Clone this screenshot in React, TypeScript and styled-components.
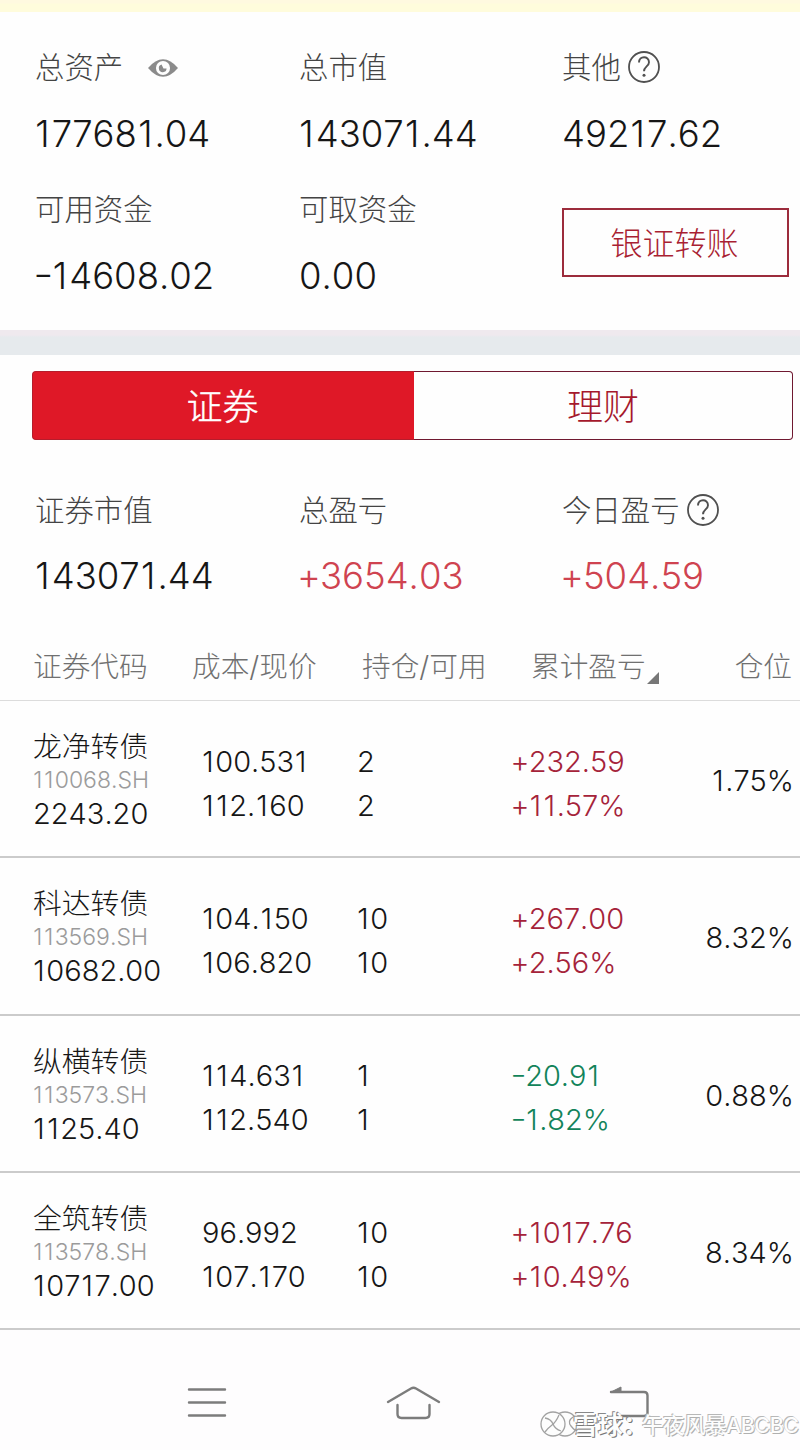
import React from "react";
import styled, { createGlobalStyle, css } from "styled-components";

const GlobalStyle = createGlobalStyle`
  * { box-sizing: border-box; }
  body {
    margin: 0;
    background: #fefefe;
    font-family: Inter, "Noto Sans CJK SC", sans-serif;
    font-weight: 300;
    font-kerning: none;
    color: #161616;
  }
`;

const Screen = styled.main`
  width: 800px;
  height: 1450px;
  overflow: hidden;
  position: relative;
  display: flex;
  flex-direction: column;
`;

const NoticeStrip = styled.div`
  height: 12px;
  background: linear-gradient(#fff9e0 0 3px, #fffcdc 4px);
`;

const Account = styled.section`
  height: 318px;
  padding: 36px 12px 0 35px;
  display: grid;
  grid-template-columns: 264px 263px 226px;
  grid-template-rows: 142px 141px;
`;

const Figures = styled.section`
  display: grid;
  grid-template-columns: 264px 263px 1fr;
  padding: 51px 12px 0 35px;
  height: 192px;
`;

const Label = styled.div`
  height: 40px;
  display: flex;
  align-items: center;
  font-size: 29.4px;
  line-height: 40px;
  color: #444;
  white-space: nowrap;
`;

type Tone = "plain" | "soft" | "up" | "down";
const tones: Record<Tone, string> = {
  plain: "#161616",
  soft: "#cf4350",
  up: "#a5233a",
  down: "#12835a",
};

const Amount = styled.div<{ $tone?: Tone }>`
  margin-top: 22.5px;
  height: 46px;
  line-height: 46px;
  font-size: 36.5px;
  color: ${(p) => tones[p.$tone ?? "plain"]};
  white-space: nowrap;
`;

const EyeIcon = styled.svg`
  margin-left: 25px;
`;

const HelpIcon = styled.svg`
  margin: -2px 0 0 6.5px;
`;

const TransferButton = styled.button`
  margin-top: 18px;
  width: 227px;
  height: 69px;
  padding: 2px 2px 0 0;
  border: 2px solid #9c2c3c;
  background: transparent;
  color: #a91f33;
  font: inherit;
  font-size: 32px;
  line-height: 60px;
`;

const Divider = styled.div`
  height: 25px;
  background: linear-gradient(#efe9ee 0 5px, #e6eaed 7px);
`;

const Tabs = styled.div`
  display: flex;
  margin: 15.5px 7px 0 32px;
  height: 69px;
`;

const Tab = styled.button<{ $active?: boolean }>`
  padding: 3px 0 0;
  font: inherit;
  font-size: 36px;
  line-height: 60px;
  ${(p) =>
    p.$active
      ? css`
          width: 382px;
          padding-right: 2px;
          border: 1px solid #b51d2c;
          border-right: 0;
          border-radius: 4px 0 0 4px;
          background: #df1827;
          color: #fff;
          -webkit-text-stroke: 0.4px #fff;
        `
      : css`
          flex: 1;
          border: 1.5px solid #6f1830;
          border-left: 0;
          border-radius: 0 4px 4px 0;
          background: #fefefe;
          color: #a5182c;
        `}
`;

const tableColumns = css`
  display: grid;
  grid-template-columns: 159px 170px 169px 150px 1fr;
  padding: 0 8px 0 33px;
`;

const TableHead = styled.div`
  ${tableColumns}
  height: 69.5px;
  border-bottom: 1px solid #dcdcdc;
  font-size: 28.7px;
  line-height: 70px;
  color: #707070;
  white-space: nowrap;
`;

const HeadCell = styled.div<{ $end?: boolean }>`
  display: flex;
  justify-content: ${(p) => (p.$end ? "flex-end" : "flex-start")};
`;

const SortMark = styled.svg`
  margin-top: 40px;
  margin-left: 1px;
`;

const Row = styled.div`
  ${tableColumns}
  padding-right: 6px;
  grid-template-columns: 169px 155px 155px 149px 1fr;
  height: 157.25px;
  border-bottom: 2px solid #cbcbcb;
  white-space: nowrap;
`;

const NameCell = styled.div`
  padding-top: 27px;
`;

const Name = styled.div`
  font-size: 28.8px;
  line-height: 37px;
`;

const Code = styled.div`
  font-size: 23px;
  line-height: 30px;
  color: #9b9b9b;
`;

const Worth = styled.div`
  font-size: 29px;
  line-height: 38px;
`;

const PairCell = styled.div<{ $tone?: Tone }>`
  padding-top: 38.5px;
  font-size: 29px;
  line-height: 44px;
  color: ${(p) => tones[p.$tone ?? "plain"]};
`;

const ShareCell = styled.div`
  font-size: 29px;
  line-height: 159px;
  display: flex;
  justify-content: flex-end;
`;

const NavBar = styled.nav`
  flex: 1;
  display: flex;
  align-items: flex-start;
  padding: 55px 0 0 187px;
  background: #fefdfe;
`;

const NavIcon = styled.svg<{ $gap?: number }>`
  margin-left: ${(p) => p.$gap ?? 0}px;
  fill: none;
  stroke: #7c7c7c;
  stroke-width: 2.4;
  stroke-linecap: round;
  stroke-linejoin: round;
`;

const Watermark = styled.div`
  position: absolute;
  left: 539px;
  top: 1407px;
  display: flex;
  align-items: center;
  height: 36px;
  line-height: 36px;
  white-space: nowrap;
  color: #fdfdfd;
  text-shadow: 1px 1px 0 #b0b0b0, -1px -1px 0 #b8b8b8;
`;

const MarkBrand = styled.span`
  margin-left: -6px;
  width: 69px;
  font-size: 25px;
  font-weight: 700;
  text-shadow: 1px 1px 0 #777, -1px -1px 0 #888;
`;

const MarkUser = styled.span`
  font-size: 21.5px;
  font-weight: 500;
  letter-spacing: -0.5px;
`;

const Help = () => (
  <HelpIcon width="34" height="34" viewBox="0 0 34 34" fill="none" stroke="#505050">
    <circle cx="17" cy="17" r="15" strokeWidth="1.8" />
    <path d="M12 12.5c0-7 10-7 10-.3 0 4-5 4.5-5 9" strokeWidth="1.9" />
    <circle cx="17" cy="25.3" r="1.5" fill="#505050" stroke="none" />
  </HelpIcon>
);

interface Holding {
  name: string;
  code: string;
  worth: string;
  price: [string, string];
  amount: [string, string];
  gain: [string, string];
  share: string;
}

const holdings: Holding[] = [
  { name: "龙净转债", code: "110068.SH", worth: "2243.20", price: ["100.531", "112.160"], amount: ["2", "2"], gain: ["+232.59", "+11.57%"], share: "1.75%" },
  { name: "科达转债", code: "113569.SH", worth: "10682.00", price: ["104.150", "106.820"], amount: ["10", "10"], gain: ["+267.00", "+2.56%"], share: "8.32%" },
  { name: "纵横转债", code: "113573.SH", worth: "1125.40", price: ["114.631", "112.540"], amount: ["1", "1"], gain: ["-20.91", "-1.82%"], share: "0.88%" },
  { name: "全筑转债", code: "113578.SH", worth: "10717.00", price: ["96.992", "107.170"], amount: ["10", "10"], gain: ["+1017.76", "+10.49%"], share: "8.34%" },
];

const Glyph = styled.span<{ $pad: number; $lead: number }>`
  margin-left: ${(p) => p.$lead}em;
  letter-spacing: ${(p) => p.$pad}em;
`;

const Minus = styled.span`
  display: inline-block;
  margin: 0 0.01em 0 -0.01em;
  transform: translateY(-0.05em) scaleX(1.22);
`;

const Num = ({ children }: { children: string }) => (
  <>
    {children.split(/(1|[+-])/).filter(Boolean).map((part, i) => {
      if (part === "1") return <Glyph key={i} $pad={0.055} $lead={i ? 0.035 : 0.01}>{part}</Glyph>;
      if (part === "+") return <Glyph key={i} $pad={-0.025} $lead={-0.055}>{part}</Glyph>;
      if (part === "-") return <Minus key={i}>{part}</Minus>;
      return <React.Fragment key={i}>{part}</React.Fragment>;
    })}
  </>
);

const Pair = ({ values, tone }: { values: [string, string]; tone?: Tone }) => (
  <PairCell $tone={tone}>
    <div><Num>{values[0]}</Num></div>
    <div><Num>{values[1]}</Num></div>
  </PairCell>
);

export default function App() {
  return (
    <Screen>
      <GlobalStyle />
      <NoticeStrip />
      <Account>
        <div>
          <Label>
            总资产
            <EyeIcon width="30" height="20" viewBox="0 0 31 20">
              <path d="M0 10Q15.500 -8 31 10Q15.500 28 0 10Z" fill="#8b8b8b" />
              <circle cx="15.500" cy="10" r="7.300" fill="#fefefe" />
              <path d="M14 6.500A4 4 0 1 0 19.200 10.500L16 10.500Z" fill="#8b8b8b" />
            </EyeIcon>
          </Label>
          <Amount><Num>177681.04</Num></Amount>
        </div>
        <div>
          <Label>总市值</Label>
          <Amount><Num>143071.44</Num></Amount>
        </div>
        <div>
          <Label>其他<Help /></Label>
          <Amount><Num>49217.62</Num></Amount>
        </div>
        <div>
          <Label>可用资金</Label>
          <Amount><Num>-14608.02</Num></Amount>
        </div>
        <div>
          <Label>可取资金</Label>
          <Amount><Num>0.00</Num></Amount>
        </div>
        <TransferButton>银证转账</TransferButton>
      </Account>
      <Divider />
      <Tabs>
        <Tab $active>证券</Tab>
        <Tab>理财</Tab>
      </Tabs>
      <Figures>
        <div>
          <Label>证券市值</Label>
          <Amount><Num>143071.44</Num></Amount>
        </div>
        <div>
          <Label>总盈亏</Label>
          <Amount $tone="soft"><Num>+3654.03</Num></Amount>
        </div>
        <div>
          <Label>今日盈亏<Help /></Label>
          <Amount $tone="soft"><Num>+504.59</Num></Amount>
        </div>
      </Figures>
      <TableHead>
        <HeadCell>证券代码</HeadCell>
        <HeadCell>成本/现价</HeadCell>
        <HeadCell>持仓/可用</HeadCell>
        <HeadCell>
          累计盈亏
          <SortMark width="12" height="12" viewBox="0 0 12 12">
            <path d="M12 0V12H0Z" fill="#777" />
          </SortMark>
        </HeadCell>
        <HeadCell $end>仓位</HeadCell>
      </TableHead>
      {holdings.map((h) => (
        <Row key={h.code}>
          <NameCell>
            <Name>{h.name}</Name>
            <Code><Num>{h.code}</Num></Code>
            <Worth><Num>{h.worth}</Num></Worth>
          </NameCell>
          <Pair values={h.price} />
          <Pair values={h.amount} />
          <Pair values={h.gain} tone={h.gain[0].startsWith("+") ? "up" : "down"} />
          <ShareCell><Num>{h.share}</Num></ShareCell>
        </Row>
      ))}
      <NavBar>
        <NavIcon width="40" height="36" viewBox="0 0 40 36">
          <path d="M2 4.500H38M2 17.500H38M2 30.500H38" />
        </NavIcon>
        <NavIcon $gap={159} width="56" height="36" viewBox="0 0 56 36">
          <path d="M2 17L25 3.500Q27.500 2 30 3.500L53 17M11.500 20V29Q11.500 33 15.500 33H39.500Q43.500 33 43.500 29V20" />
        </NavIcon>
        <NavIcon $gap={167} width="42" height="36" viewBox="0 0 42 36">
          <path d="M2 7H35Q38.500 7 38.500 10.500V28Q38.500 31 35 31H4" />
          <path d="M2 7L12 2V7Z" fill="#7c7c7c" strokeWidth="1" />
        </NavIcon>
      </NavBar>
      <Watermark>
        <svg width="40" height="30" viewBox="0 0 40 30" fill="none" stroke="#a2a2a2" strokeWidth="1.300">
          <circle cx="26" cy="14" r="12" fill="#fdfdfd" />
          <circle cx="14" cy="14" r="12" fill="#fdfdfd" />
          <path d="M6 8Q12 9 14 14T22 21M20 5Q17 12 13 15T6 22M34 7Q28 11 32 16T38 21" />
        </svg>
        <MarkBrand>雪球：</MarkBrand>
        <MarkUser>午夜风暴ABCBC</MarkUser>
      </Watermark>
    </Screen>
  );
}
